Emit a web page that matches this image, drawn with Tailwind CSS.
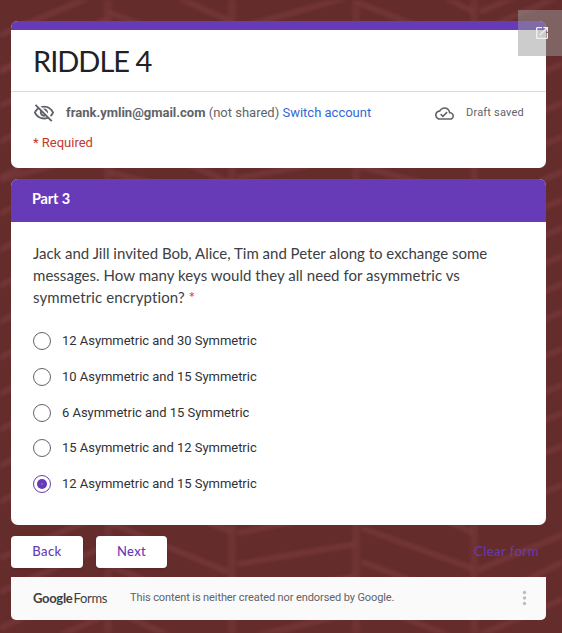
<!DOCTYPE html>
<html lang="en">
<head>
<meta charset="utf-8">
<title>RIDDLE 4</title>
<script src="https://cdn.jsdelivr.net/npm/@tailwindcss/browser@4"></script>
</head>
<body class="relative h-[633px] w-[562px] overflow-hidden bg-[#652c2c] font-[Roboto,sans-serif] text-[#202124]">
<!-- herringbone backdrop -->
<svg class="absolute inset-0 blur-[1.5px]" width="562" height="633" viewBox="0 0 562 633" fill="none" stroke="#77393c" stroke-width="6" stroke-opacity=".7">
  <path d="M108 0V633M232 0V633M356 0V633M474 0V633" stroke-width="8" stroke-opacity=".5"/>
  <path d="M0 35L95 -5M0 72L108 18M108 12L180 40M170 -6L232 22M238 28L356 -5M356 2L440 35M440 -5L474 12M480 12L520 -5M474 34L562 -5M108 172L160 185M180 160L232 184M238 178L310 165M356 165L430 185M0 180L108 150"/>
  <path d="M-5 72L20 62M-5 108L20 97M-5 144L20 132M-5 180L20 168M-5 216L20 204M-5 252L20 240M-5 288L20 276M-5 324L20 312M-5 360L20 348M-5 396L20 384M-5 432L20 420M-5 468L20 456M-5 504L20 492"/>
  <path d="M540 73L567 62M540 112L567 101M540 146L567 135M540 181L567 170M540 209L567 198M540 237L567 226M540 265L567 254M540 293L567 282M540 321L567 310M540 358L567 347M540 394L567 383M540 422L567 411M540 455L567 444M540 494L567 483"/>
  <path d="M0 558L102 515M0 592L108 545M0 628L108 580M50 640L108 614M108 522L228 572M108 565L232 616M108 608L170 636M190 515L232 532M238 533L300 520M238 564L356 544M238 602L356 576M238 640L356 612M362 528L474 569M362 562L474 604M362 601L450 636M440 518L474 533M478 570L567 533M478 604L567 560M478 636L567 597"/>
</svg>

<main class="relative flex flex-col pl-[11px] pt-[21px]">
  <section class="h-[147px] w-[535px] overflow-hidden rounded-[7px] bg-white">
    <div class="h-[9px] bg-[#673ab7]"></div>
    <h1 class="flex h-[62px] items-center border-b border-[#dadce0] pl-[22px] font-[Lato,sans-serif] text-[29px] tracking-[-1px]">RIDDLE 4</h1>
    <div class="flex h-[42px] items-center pl-[22px] text-[13px] text-[#5f6368]">
      <svg class="mr-[10px]" width="22" height="22" viewBox="0 0 24 24" fill="#5f6368"><path d="M12 6c3.79 0 7.17 2.13 8.82 5.5-.59 1.22-1.42 2.27-2.41 3.12l1.41 1.41c1.39-1.23 2.49-2.77 3.18-4.53C21.27 7.11 17 4 12 4c-1.27 0-2.49.2-3.64.57l1.65 1.65C10.66 6.09 11.32 6 12 6zm-1.07 1.14L13 9.21c.57.25 1.03.71 1.28 1.28l2.07 2.07c.08-.34.14-.7.14-1.07C16.5 9.01 14.48 7 12 7c-.37 0-.72.05-1.07.14zM2.01 3.87l2.68 2.68C3.06 7.83 1.77 9.53 1 11.5 2.73 15.89 7 19 12 19c1.52 0 2.98-.29 4.32-.82l3.42 3.42 1.41-1.41L3.42 2.45 2.01 3.87zm7.5 7.5l2.61 2.61c-.04.01-.08.02-.12.02-1.38 0-2.5-1.12-2.5-2.5 0-.05.01-.08.01-.13zm-3.4-3.4l1.75 1.75c-.23.55-.36 1.15-.36 1.78 0 2.48 2.02 4.5 4.5 4.5.63 0 1.23-.13 1.77-.36l.98.98c-.88.24-1.8.38-2.75.38-3.79 0-7.17-2.13-8.82-5.5.7-1.43 1.72-2.61 2.93-3.53z"/></svg>
      <p class="ml-px w-[369px] whitespace-nowrap"><b>frank.ymlin@gmail.com</b> <span>(not shared)</span> <a class="text-[#3367d6]">Switch account</a></p>
      <svg class="mr-[12px] shrink-0" width="19" height="19" viewBox="0 0 24 24" fill="#5f6368"><path d="M19.35 10.04C18.67 6.59 15.64 4 12 4 9.11 4 6.61 5.64 5.36 8.04 2.35 8.36 0 10.9 0 14c0 3.31 2.69 6 6 6h13c2.76 0 5-2.24 5-5 0-2.64-2.05-4.78-4.65-4.96zM19 18H6c-2.21 0-4-1.79-4-4 0-2.05 1.53-3.76 3.56-3.97l1.07-.11.5-.95C8.08 7.14 9.94 6 12 6c2.62 0 4.88 1.86 5.39 4.43l.3 1.5 1.53.11c1.56.1 2.78 1.41 2.78 2.96 0 1.65-1.35 3-3 3zm-9-3.82l-2.09-2.09L6.5 13.5 10 17l6.01-6.01-1.41-1.41z"/></svg>
      <span class="whitespace-nowrap text-[11px] tracking-[0.2px]">Draft saved</span>
    </div>
    <p class="pl-[22px] text-[13px] leading-[18px] text-[#c5362d]">* Required</p>
  </section>

  <section class="mt-[11px] h-[346px] w-[535px] overflow-hidden rounded-[7px] bg-white">
    <h2 class="flex h-[43px] items-center bg-[#673ab7] pb-[3px] pl-[21px] font-[Lato,sans-serif] text-[14.5px] font-bold tracking-[-0.15px] text-white">Part 3</h2>
    <p class="whitespace-nowrap pl-[22px] pt-[20px] font-[Lato,sans-serif] text-[15px] leading-[22px] text-[#3c4043]"><span class="tracking-[-0.01px]">Jack and Jill invited Bob, Alice, Tim and Peter along to exchange some</span><br><span class="tracking-[0.04px]">messages. How many keys would they all need for asymmetric vs</span><br><span class="tracking-[0.12px]">symmetric encryption?</span> <span class="text-[#d93025]">*</span></p>
    <ul class="mt-[15px] flex flex-col pl-[22px] text-[13px] tracking-[-0.03px] text-[#303134]">
      <li class="flex h-[36px] items-center gap-[11px]"><i class="size-[18px] rounded-full border border-[#5f6368]"></i>12 Asymmetric and 30 Symmetric</li>
      <li class="flex h-[36px] items-center gap-[11px]"><i class="size-[18px] rounded-full border border-[#5f6368]"></i>10 Asymmetric and 15 Symmetric</li>
      <li class="flex h-[36px] items-center gap-[11px]"><i class="size-[18px] rounded-full border border-[#5f6368]"></i>6 Asymmetric and 15 Symmetric</li>
      <li class="flex h-[34px] items-center gap-[11px]"><i class="size-[18px] rounded-full border border-[#5f6368]"></i>15 Asymmetric and 12 Symmetric</li>
      <li class="flex h-[38px] items-center gap-[11px]"><i class="flex size-[18px] items-center justify-center rounded-full border border-[#673ab7]"><i class="flex size-[10px] items-center justify-center rounded-full bg-[#673ab7]"><i class="size-[2px] rounded-full bg-[#9474cf]"></i></i></i>12 Asymmetric and 15 Symmetric</li>
    </ul>
  </section>

  <div class="mt-[11px] flex h-[32px] w-[535px] items-center font-[Lato,sans-serif] text-[13px] text-[#673ab7]">
    <button class="h-[32px] w-[72px] rounded-[4px] bg-white pb-[1px] font-medium tracking-[0.4px] shadow-sm">Back</button>
    <button class="ml-[13px] h-[32px] w-[71px] rounded-[4px] bg-white pb-[1px] font-medium tracking-[0.3px] shadow-sm">Next</button>
    <a class="ml-auto mr-[7px] tracking-[0.5px]">Clear form</a>
  </div>

  <footer class="mt-[9px] flex h-[43px] w-[535px] items-center rounded-b-[5px] bg-[#fafafa] pl-[22px] text-[11px] text-[#5f6368]">
    <p class="w-[97px] whitespace-nowrap font-[Lato,sans-serif] text-[13px] tracking-[-0.3px] text-[#3c4043]"><b>Google</b><span class="ml-[1px]">Forms</span></p>
    <p class="whitespace-nowrap tracking-[-0.1px]">This content is neither created nor endorsed by Google.</p>
    <svg class="ml-auto mr-[19px] mt-[-2px]" width="5" height="16" fill="#bdbdbd"><circle cx="2.5" cy="2.5" r="1.7"/><circle cx="2.5" cy="8" r="1.7"/><circle cx="2.5" cy="13.5" r="1.7"/></svg>
  </footer>
</main>

<a class="absolute left-[518px] top-[10px] flex h-[46px] w-[44px] items-center justify-center bg-[#999999]/50 pl-[3px]">
  <svg width="16" height="16" viewBox="0 0 24 24" fill="#f1f1f1"><path d="M19 19H5V5h7V3H5c-1.11 0-2 .9-2 2v14c0 1.1.89 2 2 2h14c1.1 0 2-.9 2-2v-7h-2v7zM14 3v2h3.59l-9.83 9.83 1.41 1.41L19 6.41V10h2V3h-7z"/></svg>
</a>
</body>
</html>
